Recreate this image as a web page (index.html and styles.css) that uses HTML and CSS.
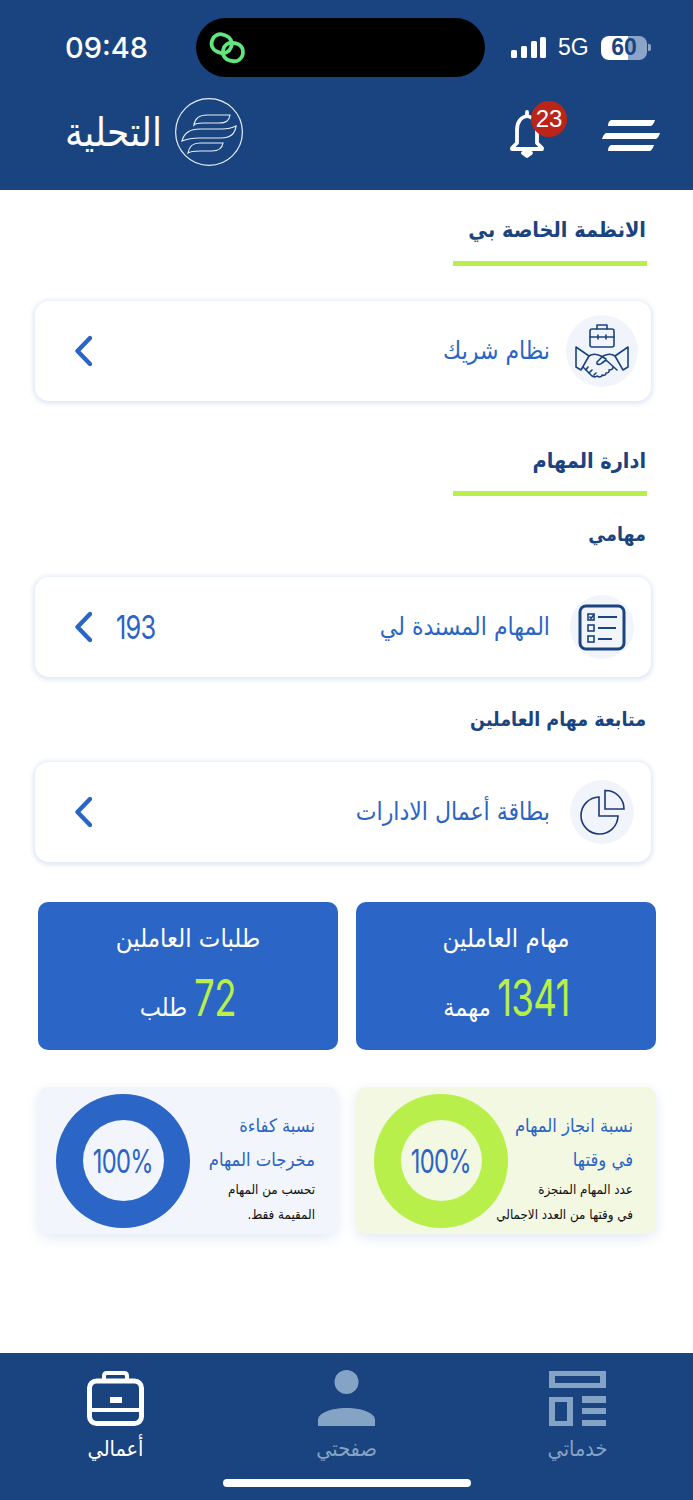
FILE: index.html
```html
<!DOCTYPE html>
<html lang="ar" dir="rtl">
<head>
<meta charset="utf-8">
<title>التحلية</title>
<link rel="stylesheet" href="styles.css">
</head>
<body>
<div class="page">
  <header class="header">
    <div class="status">
      <span class="time">09:48</span>
      <div class="island">
        <svg class="link" width="38" height="32" viewBox="0 0 38 32" fill="none" stroke="#62e57c" stroke-width="3.800"><rect x="2.500" y="2.500" width="20" height="18" rx="8.500" transform="rotate(20 12 12)"/><rect x="14" y="11" width="20" height="18" rx="8.500" transform="rotate(10 24 20)"/></svg>
      </div>
      <svg class="signal" width="35" height="21" viewBox="0 0 35 21" fill="#fff"><rect x="0" y="13" width="6" height="8" rx="1.500"/><rect x="10" y="9" width="6" height="12" rx="1.500"/><rect x="20" y="4" width="6" height="17" rx="1.500"/><rect x="29" y="0" width="6" height="21" rx="1.500"/></svg>
      <span class="net">5G</span>
      <div class="battery"><span class="battery-num">60</span></div>
      <span class="battery-nub"></span>
    </div>
    <div class="nav">
      <div class="brand">
        <span class="brand-name">التحلية</span>
        <svg class="brand-mark" width="68" height="68" viewBox="0 0 68 68" fill="none" stroke="#e8eef6" stroke-width="1.200"><circle cx="34" cy="34" r="33.400"/><path d="M19 27c1-7 6-10 13-10h23c-1 6-4 8-11 8H28c-4 0-7 0-9 2z"/><path d="M7 43c2-8 9-12 18-12h22c6 0 10-1 14-3-1 9-7 12-15 12H24c-7 0-12 1-17 3z"/><path d="M13 55c1-7 6-10 12-10h23c-1 6-5 8-11 8H25c-5 0-9 0-12 2z"/></svg>
      </div>
      <div class="nav-actions">
        <div class="bell">
          <svg width="36" height="48" viewBox="0 0 36 48" fill="none" stroke="#fff" stroke-width="3.800" stroke-linejoin="round" stroke-linecap="round"><path d="M18 6c-6 1-10 6-10 14v13l-5 5v1h30v-1l-5-5V20c0-8-4-13-10-14z"/><path d="M18 2v4"/><path d="M14 43h8l-4 3z" fill="#fff"/></svg>
          <span class="badge">23</span>
        </div>
        <svg class="burger" width="58" height="32" viewBox="0 0 58 32" fill="#fff"><path d="M9 1h44c-1 3-2 5-4 6H6c0-3 1-5 3-6z"/><path d="M4 14h54c-1 3-2 5-4 6H0c1-3 2-5 4-6z"/><path d="M9 26h43c-1 3-2 5-4 6H6c0-3 1-5 3-6z"/></svg>
      </div>
    </div>
  </header>

  <main class="main">
    <h2 class="section-title first">الانظمة الخاصة بي</h2>
    <div class="rule first-rule"></div>
    <a class="card">
      <span class="icon-wrap"><span class="icon-circle large">
        <svg width="60" height="56" viewBox="0 0 60 56" fill="none" stroke="#1a4480" stroke-width="1.600" stroke-linejoin="round" stroke-linecap="round"><rect x="18" y="6" width="24" height="18" rx="2"/><path d="M25 6V2h10v4M18 14h24M26 12v4M34 12v4"/><path d="M4 24l13 9-8 14-5-3zM56 24l-13 9 8 14 5-3z"/><path d="M17 33c4-3 8-2 12 0l5 3M43 33c-4-3-8-2-12 0l-6 6c-1 3 3 3 5 1l4-3 11 10"/><path d="M11 44l9 9c2 1 4 1 5 0l2 1c2 0 3-1 3-2 2 1 4 0 4-2 2 0 4-1 3-3 2 0 4-1 4-3"/><path d="M16 44l-2 3M20 47l-3 3M24 50l-2 2"/></svg>
      </span></span>
      <span class="card-label">نظام شريك</span>
      <svg class="chev" width="17" height="32" viewBox="0 0 17 32" fill="none" stroke="#2a64c4" stroke-width="4.400" stroke-linecap="round" stroke-linejoin="round"><path d="M15 3L2.500 16 15 29"/></svg>
    </a>

    <h2 class="section-title second">ادارة المهام</h2>
    <div class="rule"></div>
    <h3 class="sub-title sub-one">مهامي</h3>
    <a class="card">
      <span class="icon-wrap"><span class="icon-circle">
        <svg width="48" height="47" viewBox="0 0 48 47" fill="none" stroke="#1a4480" stroke-width="1.600"><rect x="2" y="2" width="44" height="43" rx="6" stroke-width="3"/><rect x="10" y="10" width="6" height="6"/><path d="M11.500 12.500l1.500 2 3-4"/><rect x="10" y="21" width="6" height="6"/><rect x="10" y="32" width="6" height="6"/><path d="M20 13h19M20 24h18M20 35h14" stroke-width="2"/></svg>
      </span></span>
      <span class="card-label">المهام المسندة لي</span>
      <span class="count">193</span>
      <svg class="chev" width="17" height="32" viewBox="0 0 17 32" fill="none" stroke="#2a64c4" stroke-width="4.400" stroke-linecap="round" stroke-linejoin="round"><path d="M15 3L2.500 16 15 29"/></svg>
    </a>
    <h3 class="sub-title sub-two">متابعة مهام العاملين</h3>
    <a class="card">
      <span class="icon-wrap"><span class="icon-circle">
        <svg width="46" height="46" viewBox="0 0 46 46" fill="none" stroke="#1a3a7a" stroke-width="1.600"><path d="M20 8A18.500 18.500 0 1 0 39 27H20z"/><path d="M26 1.500A18.500 18.500 0 0 1 45 20H26z"/></svg>
      </span></span>
      <span class="card-label">بطاقة أعمال الادارات</span>
      <svg class="chev" width="17" height="32" viewBox="0 0 17 32" fill="none" stroke="#2a64c4" stroke-width="4.400" stroke-linecap="round" stroke-linejoin="round"><path d="M15 3L2.500 16 15 29"/></svg>
    </a>

    <div class="stats">
      <div class="stat">
        <div class="stat-title">مهام العاملين</div>
        <div class="stat-value"><b class="num num-long">1341</b> <span>مهمة</span></div>
      </div>
      <div class="stat">
        <div class="stat-title">طلبات العاملين</div>
        <div class="stat-value"><b class="num num-short">72</b> <span>طلب</span></div>
      </div>
    </div>

    <div class="rates">
      <div class="rate rate-lime">
        <div class="rate-text">
          <div class="rate-title">نسبة انجاز المهام</div>
          <div class="rate-title">في وقتها</div>
          <div class="rate-note">عدد المهام المنجزة</div>
          <div class="rate-note">في وقتها من العدد الاجمالي</div>
        </div>
        <div class="ring ring-lime"><span class="ring-hole"><span class="ring-num">100%</span></span></div>
      </div>
      <div class="rate rate-blue">
        <div class="rate-text">
          <div class="rate-title">نسبة كفاءة</div>
          <div class="rate-title">مخرجات المهام</div>
          <div class="rate-note">تحسب من المهام</div>
          <div class="rate-note">المقيمة فقط.</div>
        </div>
        <div class="ring ring-blue"><span class="ring-hole"><span class="ring-num">100%</span></span></div>
      </div>
    </div>
  </main>

  <footer class="footer">
    <div class="tabs">
      <div class="tab">
        <svg width="57" height="56" viewBox="0 0 57 56" fill="#85a3c5"><path fill-rule="evenodd" d="M0 1h57v17H0zM6 6v7h45V6z"/><path fill-rule="evenodd" d="M0 27h24v29H0zM6 32v19h12V32z"/><path d="M33 26h24v7H33zM33 38h24v6H33zM33 50h24v6H33z"/></svg>
        <span class="tab-label">خدماتي</span>
      </div>
      <div class="tab">
        <svg width="57" height="56" viewBox="0 0 57 56" fill="#85a3c5"><circle cx="28.500" cy="12" r="12"/><path d="M0 56v-6c0-7 13-12 28.500-12S57 43 57 50v6z"/></svg>
        <span class="tab-label">صفحتي</span>
      </div>
      <div class="tab active">
        <svg width="57" height="56" viewBox="0 0 57 56" fill="none" stroke="#fff" stroke-width="5"><rect x="2.500" y="11" width="52" height="42.500" rx="7"/><path d="M17 11V6c0-2 1-3 3-3h17c2 0 3 1 3 3v5" stroke-width="4"/><path d="M2 40h53" stroke-width="4"/><rect x="23" y="27" width="12" height="6" fill="#fff" stroke="none"/></svg>
        <span class="tab-label">أعمالي</span>
      </div>
    </div>
    <div class="home-bar"></div>
  </footer>
</div>
</body>
</html>
```
FILE: styles.css
```css
* { box-sizing: border-box; }
html, body { margin: 0; padding: 0; background: #fff; }
body { font-family: "DejaVu Sans Condensed", "DejaVu Sans", "Noto Sans", sans-serif; color: #1a4480; }
.page { width: 693px; height: 1500px; display: flex; flex-direction: column; overflow: hidden; }

.header { height: 190px; background: #1a4480; color: #fff; direction: ltr; flex: none; padding-top: 18px; }
.status { display: flex; align-items: center; height: 59px; padding-left: 65px; }
.time { width: 131px; font: 500 29px "Inter", sans-serif; }
.island { width: 289px; height: 59px; background: #000; border-radius: 30px; display: flex; align-items: center; padding-left: 13px; }
.signal { margin-left: 26px; }
.net { font: 400 23px "Liberation Sans", sans-serif; margin-left: 12px; width: 31px; }
.battery { width: 46px; height: 24px; margin-left: 12px; border-radius: 8px; background: linear-gradient(to right, #fff 59%, #8ba5c8 59%); display: flex; align-items: center; justify-content: center; }
.battery-num { font: 700 23px "Liberation Sans", sans-serif; color: #1a4480; }
.battery-nub { width: 3px; height: 7px; background: #8ba5c8; margin-left: 1px; border-radius: 0 2px 2px 0; }

.nav { display: flex; justify-content: space-between; align-items: center; height: 68px; margin-top: 21px; padding: 0 33px 0 65px; }
.brand { display: flex; align-items: center; gap: 13px; }
.brand-name { font-size: 40px; line-height: 44px; color: #fff; width: 97px; white-space: nowrap; direction: rtl; display: block; text-align: center; }
.nav-actions { display: flex; align-items: center; gap: 57px; }
.bell { position: relative; width: 36px; height: 48px; margin-top: 4px; }
.badge { position: absolute; left: 22px; top: -9px; width: 36px; height: 36px; border-radius: 50%; background: #bb2419; color: #fff; font: 400 24px/36px "Liberation Sans", sans-serif; text-align: center; }
.burger { margin-top: 6px; }

.main { flex: 1; padding: 0 37px 0 38px; }
.section-title { margin: 0; font-size: 21.500px; line-height: 28px; font-weight: 700; color: #1a4480; margin-right: 10px; }
.section-title.first { margin-top: 26px; margin-bottom: 17px; }
.section-title.second { margin-top: 46px; margin-bottom: 16px; }
.rule { width: 194px; height: 5px; background: #b8ef4a; margin-right: 9px; }
.first-rule { margin-bottom: 35px; }
.sub-title { margin: 0 10px 0 0; font-size: 19.500px; line-height: 24px; font-weight: 700; color: #1a4480; }
.sub-one { margin-top: 27px; margin-bottom: 30px; }
.sub-two { margin-top: 31px; margin-bottom: 30px; }

.card { display: flex; align-items: center; height: 100px; margin: 0 5px 0 -3px; background: #fff; border-radius: 14px; box-shadow: 0 1px 5px 2px #e0e8f4; padding: 0 13px 0 40px; }
.icon-wrap { width: 72px; display: flex; justify-content: center; flex: none; }
.icon-circle { width: 64px; height: 64px; border-radius: 50%; background: #f1f5fb; display: flex; align-items: center; justify-content: center; }
.icon-circle.large { width: 72px; height: 72px; }
.card-label { flex: 1; margin-right: 16px; font-size: 24.500px; line-height: 32px; color: #2a64c4; }
.count { font: 400 33px "Inter", sans-serif; color: #2a64c4; margin: 0 -5px 0 18px; direction: ltr; letter-spacing: -1px; transform: scaleX(.77); }
.chev { flex: none; }

.stats { display: flex; gap: 18px; margin-top: 40px; }
.stat { width: 300px; height: 148px; border-radius: 10px; background: #2b65c5; color: #fff; text-align: center; padding-top: 20px; }
.stat-title { font-size: 25.500px; line-height: 32px; }
.stat-value { margin-top: 14px; line-height: 60px; font-size: 25px; }
.num { display: inline-block; font: 400 51px/60px "Inter", sans-serif; color: #b8ef4a; letter-spacing: -1px; transform: scaleX(.72); }
.num-long { margin: 0 -15px; }
.num-short { margin: 0 -8px; }

.rates { display: flex; gap: 18px; margin-top: 37px; }
.rate { width: 300px; height: 147px; border-radius: 10px; display: flex; align-items: center; padding: 0 18px; box-shadow: 0 4px 14px #e2e9f4; }
.rate-lime { background: #f3f8e3; }
.rate-blue { background: #f2f5fb; }
.rate-text { flex: 1; min-width: 0; padding: 14px 5px 0 0; color: #111; }
.rate-title { font-size: 18.300px; line-height: 34px; color: #2a64c4; white-space: nowrap; }
.rate-note { font-size: 13.300px; line-height: 25px; color: #111; white-space: nowrap; }
.ring { width: 134px; height: 134px; border-radius: 50%; display: flex; align-items: center; justify-content: center; flex: none; }
.ring-lime { background: #b8ef4a; }
.ring-lime .ring-hole { background: #f3f8e3; }
.ring-blue { background: #2b65c5; }
.ring-blue .ring-hole { background: #f2f5fb; }
.ring-hole { width: 81px; height: 81px; border-radius: 50%; display: flex; align-items: center; justify-content: center; }
.ring-num { font: 400 33px "Inter", sans-serif; color: #2a64c4; letter-spacing: -1px; direction: ltr; transform: scaleX(.72); white-space: nowrap; }

.footer { height: 147px; flex: none; background: #1a4480; padding-top: 17px; }
.tabs { display: grid; grid-template-columns: repeat(3, 1fr); height: 109px; }
.tab { display: flex; flex-direction: column; align-items: center; }
.tab-label { margin-top: 11px; font-size: 21.500px; line-height: 24px; color: #85a3c5; }
.tab.active .tab-label { color: #fff; }
.home-bar { width: 248px; height: 8px; margin: 0 auto; border-radius: 4px; background: #fff; }
```
